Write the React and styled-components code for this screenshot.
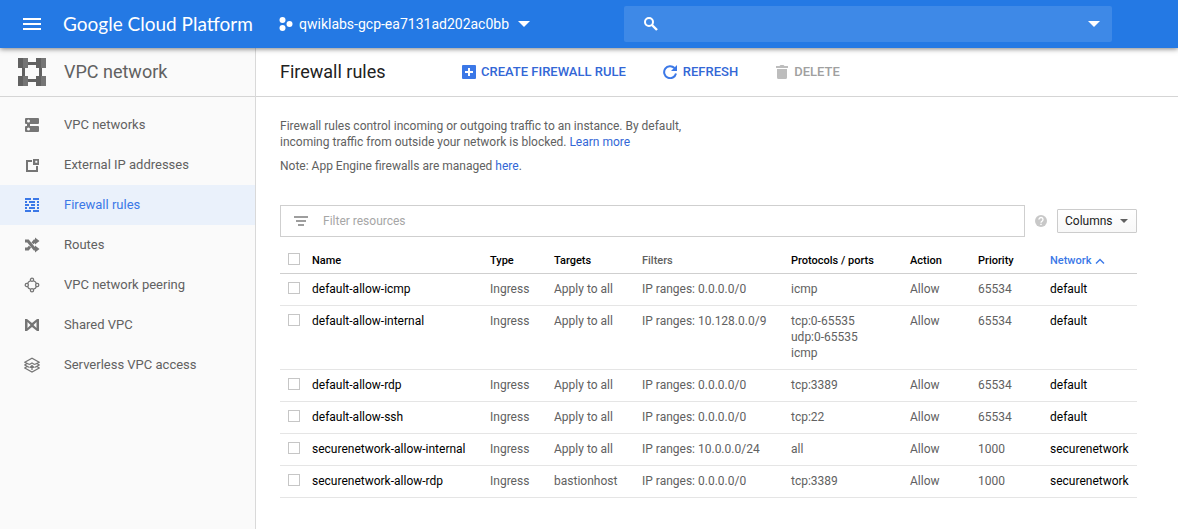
import React from 'react';
import styled, { createGlobalStyle } from 'styled-components';

const GlobalStyle = createGlobalStyle`
  *, *::before, *::after { box-sizing: border-box; }
  body {
    margin: 0;
    background: #fff;
    color: #616161;
    font-family: Roboto, "Liberation Sans", sans-serif;
    font-size: 12px;
    line-height: 16px;
  }
  button, input { font: inherit; color: inherit; }
`;

const Page = styled.div`
  display: flex;
  flex-direction: column;
  min-height: 100vh;
`;

const TopBar = styled.header`
  position: relative;
  z-index: 1;
  display: flex;
  align-items: center;
  height: 48px;
  padding: 0 66px 0 20px;
  background: #2479e4;
  color: #fff;
  box-shadow: 0 1px 5px rgba(0, 0, 0, 0.5);
`;

const PlainButton = styled.button`
  display: inline-flex;
  align-items: center;
  padding: 0;
  border: 0;
  background: none;
  cursor: pointer;
`;

const Brand = styled.a`
  width: 216px;
  margin-left: 19px;
  color: #fff;
  font-family: Lato, sans-serif;
  font-size: 19px;
  line-height: 24px;
  white-space: nowrap;
  text-decoration: none;
`;

const ProjectPicker = styled(PlainButton)`
  flex: none;
  gap: 6px;
  font-size: 14px;
  white-space: nowrap;

  svg:last-child { margin-left: 3px; }
`;

const SearchBox = styled.div`
  display: flex;
  flex: 1;
  align-items: center;
  height: 36px;
  margin-left: 94px;
  padding: 0 12px 0 19px;
  border-radius: 2px;
  background: #3e89e7;
`;

const SearchInput = styled.input`
  flex: 1;
  min-width: 0;
  margin: 0 8px;
  border: 0;
  outline: 0;
  background: none;
  font-size: 14px;
`;

const Body = styled.div`
  display: flex;
  flex: 1;
`;

const Sidebar = styled.aside`
  flex: none;
  width: 256px;
  border-right: 1px solid #d9d9d9;
  background: #fafafa;
`;

const SidebarHead = styled.div`
  display: flex;
  align-items: center;
  gap: 18px;
  height: 49px;
  padding-left: 18px;
  border-bottom: 1px solid #d5d5d5;
  font-size: 18px;
  line-height: 24px;
`;

const NavList = styled.ul`
  margin: 0;
  padding: 8px 0;
  list-style: none;
`;

const NavLink = styled.a`
  display: flex;
  align-items: center;
  gap: 24px;
  height: 40px;
  padding-left: 24px;
  background: ${(p) => (p.$active ? '#eaf1fb' : 'transparent')};
  color: ${(p) => (p.$active ? '#3b78e7' : '#616161')};
  font-size: 13px;
  text-decoration: none;

  svg { color: ${(p) => (p.$active ? '#3b78e7' : '#757575')}; }
`;

const Main = styled.main`
  flex: 1;
  min-width: 0;
`;

const Toolbar = styled.div`
  display: flex;
  align-items: center;
  height: 49px;
  padding-left: 24px;
  border-bottom: 1px solid #d5d5d5;
`;

const PageTitle = styled.h1`
  width: 182px;
  margin: 0;
  color: #212121;
  font-size: 18px;
  font-weight: 400;
  line-height: 24px;
`;

const Actions = styled.div`
  display: flex;
  gap: 37px;
`;

const ActionButton = styled(PlainButton)`
  gap: 5px;
  color: #3367d6;
  font-size: 13px;
  font-weight: 500;
  white-space: nowrap;

  svg { color: #3b78e7; }
  &:disabled { color: #a0a0a0; cursor: default; }
  &:disabled svg { color: #bdbdbd; }
`;

const Content = styled.div`
  padding: 21px 41px 24px 24px;
`;

const Intro = styled.div`
  max-width: 408px;
  margin-bottom: 31px;

  p { margin: 0 0 8px; }
  p:last-child { margin: 0; }
`;

const Link = styled.a`
  color: #3367d6;
  text-decoration: none;
`;

const FilterRow = styled.div`
  display: flex;
  align-items: center;
`;

const FilterBox = styled.label`
  display: flex;
  flex: 1;
  align-items: center;
  gap: 15px;
  height: 32px;
  padding: 0 13px;
  border: 1px solid #cfcfcf;
  color: #9e9e9e;
`;

const FilterInput = styled.input`
  flex: 1;
  min-width: 0;
  padding: 0;
  border: 0;
  outline: 0;
  background: none;

  &::placeholder { color: #a6a6a6; opacity: 1; }
`;

const HelpButton = styled(PlainButton)`
  margin: 0 10px;
  color: #c8c8c8;
`;

const ColumnsButton = styled(PlainButton)`
  justify-content: space-between;
  width: 80px;
  height: 24px;
  padding: 0 8px 0 7px;
  border: 1px solid #cccccc;
  border-radius: 1px;
  background: linear-gradient(#fff, #f8f8f8);
  color: #212121;

  svg { color: #616161; }
`;

const Table = styled.table`
  width: 100%;
  margin-top: 8px;
  border-collapse: separate;
  border-spacing: 0;
  table-layout: fixed;
  text-align: left;
`;

const Column = styled.col`
  width: ${(p) => (p.$width ? `${p.$width}px` : 'auto')};
`;

const HeadCell = styled.th`
  height: 29px;
  padding: ${(p) => (p.$tick ? '7px' : '8px')} 0 4px;
  border-bottom: 1px solid #cfcfcf;
  color: ${(p) => (p.$muted ? '#616161' : '#000')};
  font-size: 11px;
  font-weight: 500;
  vertical-align: top;
  white-space: nowrap;
`;

const SortButton = styled(PlainButton)`
  gap: 4px;
  color: #3b78e7;
`;

const Cell = styled.td`
  padding: 7px 0 8px;
  border-bottom: 1px solid #e5e5e5;
  vertical-align: top;
  white-space: pre-line;
`;

const CellLink = styled.a`
  color: #000;
  text-decoration: none;
`;

const Checkbox = styled.input.attrs({ type: 'checkbox' })`
  display: block;
  width: 12px;
  height: 12px;
  margin: 1px 0 0 8px;
  border: 1px solid #c6c6c6;
  background: #fff;
  appearance: none;

  &:checked { background: #3b78e7; }
`;

const Svg = ({ w, h = w, children }) => (
  <svg width={w} height={h} viewBox={`0 0 ${w} ${h}`} fill="currentColor" aria-hidden="true">
    {children}
  </svg>
);

const Arrow = ({ w, h }) => (
  <Svg w={w} h={h}>
    <path d={`M0 0H${w}L${w / 2} ${h}Z`} />
  </Svg>
);

const VpcLogo = () => (
  <Svg w={28}>
    <path fill="#616161" d="M4 8h3v12H4zM21 8h3v12h-3zM8 4h12v3H8zM8 21h12v3H8z" />
    <path fill="#757575" d="M0 0h10v10H0zM18 0h10v10H18zM0 18h10v10H0zM18 18h10v10H18z" />
    <path fill="#616161" d="M0 0h5v10H0zM18 0h5v10H18zM0 18h5v10H0zM18 18h5v10H18z" />
  </Svg>
);

const navIcons = {
  networks: (
    <path
      fillRule="evenodd"
      d="M2 1H14a1 1 0 0 1 1 1V6a1 1 0 0 1-1 1H6V9H14a1 1 0 0 1 1 1V14a1 1 0 0 1-1 1H2a1 1 0 0 1-1-1V10a1 1 0 0 1 1-1H3V7H2a1 1 0 0 1-1-1V2a1 1 0 0 1 1-1ZM4.500 2.500a1.500 1.500 0 1 0 0 3a1.500 1.500 0 0 0 0-3ZM4.500 10.500a1.500 1.500 0 1 0 0 3a1.500 1.500 0 0 0 0-3Z"
    />
  ),
  external: (
    <path
      fillRule="evenodd"
      d="M2 3H8V5H4V13H12V9H14V15H2ZM9 2H15V8H9ZM11.300 3.800V5.800H13.300V3.800Z"
    />
  ),
  firewall: (
    <path d="M1 1h6v2H1zM9 1h6v2H9zM1 4h2v2H1zM5 4h6v2H5zM13 4h2v2h-2zM1 7h4v2H1zM7 7h4v2H7zM13 7h2v2h-2zM1 10h2v2H1zM5 10h6v2H5zM13 10h2v2h-2zM1 13h6v2H1zM9 13h6v2H9z" />
  ),
  routes: (
    <>
      <path d="M1 4H4L10.500 12H12M1 12H4L6 9.600M8.600 6.400L10.500 4H12" fill="none" stroke="currentColor" strokeWidth="3" />
      <path d="M11 0.500L15.500 4L11 7.500ZM11 8.500L15.500 12L11 15.500Z" />
    </>
  ),
  peering: (
    <g fill="none" stroke="currentColor" strokeWidth="1.300">
      <circle cx="8" cy="2.800" r="1.600" />
      <circle cx="8" cy="13.200" r="1.600" />
      <circle cx="2.800" cy="8" r="1.600" />
      <circle cx="13.200" cy="8" r="1.600" />
      <path d="M6.400 3.800Q4.200 4.500 3.600 6.500M9.600 3.800Q11.800 4.500 12.400 6.500M3.600 9.500Q4.200 11.500 6.400 12.200M12.400 9.500Q11.800 11.500 9.600 12.200" />
    </g>
  ),
  shared: (
    <path
      fillRule="evenodd"
      d="M1 2H3L8 6L13 2H15V14H13L8 10L3 14H1ZM3.500 5V11L6.500 8ZM12.500 5V11L9.500 8Z"
    />
  ),
  serverless: (
    <g fill="none" stroke="currentColor" strokeWidth="1.200">
      <path d="M5.500 7.500L0.800 5.200L8 1.200L15.200 5.200L10.500 7.500M3 6.500L0.800 8L5.500 10.500M13 6.500L15.200 8L10.500 10.500M3 9.500L0.800 11L8 15L15.200 11L13 9.500M5.500 7.500L8 6L10.500 7.500" />
      <path d="M8 13V8.500M6 10.500L8 8.500L10 10.500" />
    </g>
  ),
};

const navItems = [
  { icon: 'networks', label: 'VPC networks' },
  { icon: 'external', label: 'External IP addresses' },
  { icon: 'firewall', label: 'Firewall rules', active: true },
  { icon: 'routes', label: 'Routes' },
  { icon: 'peering', label: 'VPC network peering' },
  { icon: 'shared', label: 'Shared VPC' },
  { icon: 'serverless', label: 'Serverless VPC access' },
];

const columnWidths = [32, null, 64, 88, 149, 119, 68, 72, 87];

const rules = [
  ['default-allow-icmp', 'Apply to all', '0.0.0.0/0', 'icmp', '65534', 'default'],
  ['default-allow-internal', 'Apply to all', '10.128.0.0/9', 'tcp:0-65535\nudp:0-65535\nicmp', '65534', 'default'],
  ['default-allow-rdp', 'Apply to all', '0.0.0.0/0', 'tcp:3389', '65534', 'default'],
  ['default-allow-ssh', 'Apply to all', '0.0.0.0/0', 'tcp:22', '65534', 'default'],
  ['securenetwork-allow-internal', 'Apply to all', '10.0.0.0/24', 'all', '1000', 'securenetwork'],
  ['securenetwork-allow-rdp', 'bastionhost', '0.0.0.0/0', 'tcp:3389', '1000', 'securenetwork'],
];

function Header() {
  return (
    <TopBar>
      <PlainButton type="button" aria-label="Main menu">
        <Svg w={24}>
          <path d="M3 6h18v2H3zM3 11h18v2H3zM3 16h18v2H3z" />
        </Svg>
      </PlainButton>
      <Brand href="#home">Google Cloud Platform</Brand>
      <ProjectPicker type="button">
        <Svg w={14}>
          <circle cx="3.500" cy="3" r="3" />
          <circle cx="3.500" cy="11" r="3" />
          <circle cx="10.500" cy="7" r="3" />
        </Svg>
        <span>qwiklabs-gcp-ea7131ad202ac0bb</span>
        <Arrow w={12} h={6} />
      </ProjectPicker>
      <SearchBox role="search">
        <Svg w={16}>
          <circle cx="6" cy="6" r="4" fill="none" stroke="currentColor" strokeWidth="2" />
          <path d="M9 9L14 14" stroke="currentColor" strokeWidth="2.400" />
        </Svg>
        <SearchInput type="text" aria-label="Search products and resources" />
        <PlainButton type="button" aria-label="Search options">
          <Arrow w={12} h={6} />
        </PlainButton>
      </SearchBox>
    </TopBar>
  );
}

function Navigation() {
  return (
    <Sidebar>
      <SidebarHead>
        <VpcLogo />
        <span>VPC network</span>
      </SidebarHead>
      <nav aria-label="VPC network">
        <NavList>
          {navItems.map((item) => (
            <li key={item.icon}>
              <NavLink href={`#${item.icon}`} $active={item.active} aria-current={item.active ? 'page' : undefined}>
                <Svg w={16}>{navIcons[item.icon]}</Svg>
                {item.label}
              </NavLink>
            </li>
          ))}
        </NavList>
      </nav>
    </Sidebar>
  );
}

function RulesTable() {
  return (
    <Table>
      <colgroup>
        {columnWidths.map((width, i) => (
          <Column key={i} $width={width} />
        ))}
      </colgroup>
      <thead>
        <tr>
          <HeadCell $tick>
            <Checkbox aria-label="Select all rules" />
          </HeadCell>
          <HeadCell>Name</HeadCell>
          <HeadCell>Type</HeadCell>
          <HeadCell>Targets</HeadCell>
          <HeadCell $muted>Filters</HeadCell>
          <HeadCell>Protocols / ports</HeadCell>
          <HeadCell>Action</HeadCell>
          <HeadCell>Priority</HeadCell>
          <HeadCell aria-sort="ascending">
            <SortButton type="button">
              Network
              <Svg w={10} h={6}>
                <path d="M1 5.500L5 1.500L9 5.500" fill="none" stroke="currentColor" strokeWidth="1.400" />
              </Svg>
            </SortButton>
          </HeadCell>
        </tr>
      </thead>
      <tbody>
        {rules.map(([name, targets, range, ports, priority, network]) => (
          <tr key={name}>
            <Cell>
              <Checkbox aria-label={`Select ${name}`} />
            </Cell>
            <Cell>
              <CellLink href={`#${name}`}>{name}</CellLink>
            </Cell>
            <Cell>Ingress</Cell>
            <Cell>{targets}</Cell>
            <Cell>{`IP ranges: ${range}`}</Cell>
            <Cell>{ports}</Cell>
            <Cell>Allow</Cell>
            <Cell>{priority}</Cell>
            <Cell>
              <CellLink href={`#network-${network}`}>{network}</CellLink>
            </Cell>
          </tr>
        ))}
      </tbody>
    </Table>
  );
}

export default function App() {
  return (
    <Page>
      <GlobalStyle />
      <Header />
      <Body>
        <Navigation />
        <Main>
          <Toolbar>
            <PageTitle>Firewall rules</PageTitle>
            <Actions>
              <ActionButton type="button">
                <Svg w={14}>
                  <path fillRule="evenodd" d="M1 0H13a1 1 0 0 1 1 1V13a1 1 0 0 1-1 1H1a1 1 0 0 1-1-1V1a1 1 0 0 1 1-1ZM6 3V6H3V8H6V11H8V8H11V6H8V3Z" />
                </Svg>
                CREATE FIREWALL RULE
              </ActionButton>
              <ActionButton type="button">
                <Svg w={15} h={14}>
                  <path d="M11.500 3A6 6 0 1 0 13 8.500" fill="none" stroke="currentColor" strokeWidth="2" />
                  <path d="M14 0V6H8Z" />
                </Svg>
                REFRESH
              </ActionButton>
              <ActionButton type="button" disabled>
                <Svg w={14}>
                  <path d="M2 4H12V12.500a1.500 1.500 0 0 1-1.500 1.500H3.500a1.500 1.500 0 0 1-1.500-1.500ZM1 1H4.500L5.500 0H8.500L9.500 1H13V3H1Z" />
                </Svg>
                DELETE
              </ActionButton>
            </Actions>
          </Toolbar>
          <Content>
            <Intro>
              <p>
                Firewall rules control incoming or outgoing traffic to an instance. By default, incoming traffic
                from outside your network is blocked. <Link href="#learn">Learn more</Link>
              </p>
              <p>
                Note: App Engine firewalls are managed <Link href="#app-engine">here</Link>.
              </p>
            </Intro>
            <FilterRow>
              <FilterBox>
                <Svg w={14} h={16}>
                  <path d="M0 3h14v2H0zM2 7h10v2H2zM4 11h6v2H4z" />
                </Svg>
                <FilterInput type="text" placeholder="Filter resources" aria-label="Filter resources" />
              </FilterBox>
              <HelpButton type="button" aria-label="Filter help">
                <Svg w={12}>
                  <circle cx="6" cy="6" r="6" />
                  <path d="M4 4.600A2 2 0 1 1 7.200 6.100Q6 6.800 6 7.800" fill="none" stroke="#fff" strokeWidth="1.300" />
                  <path d="M5.300 8.700h1.400v1.400H5.300z" fill="#fff" />
                </Svg>
              </HelpButton>
              <ColumnsButton type="button" aria-haspopup="menu">
                Columns
                <Arrow w={8} h={4} />
              </ColumnsButton>
            </FilterRow>
            <RulesTable />
          </Content>
        </Main>
      </Body>
    </Page>
  );
}
